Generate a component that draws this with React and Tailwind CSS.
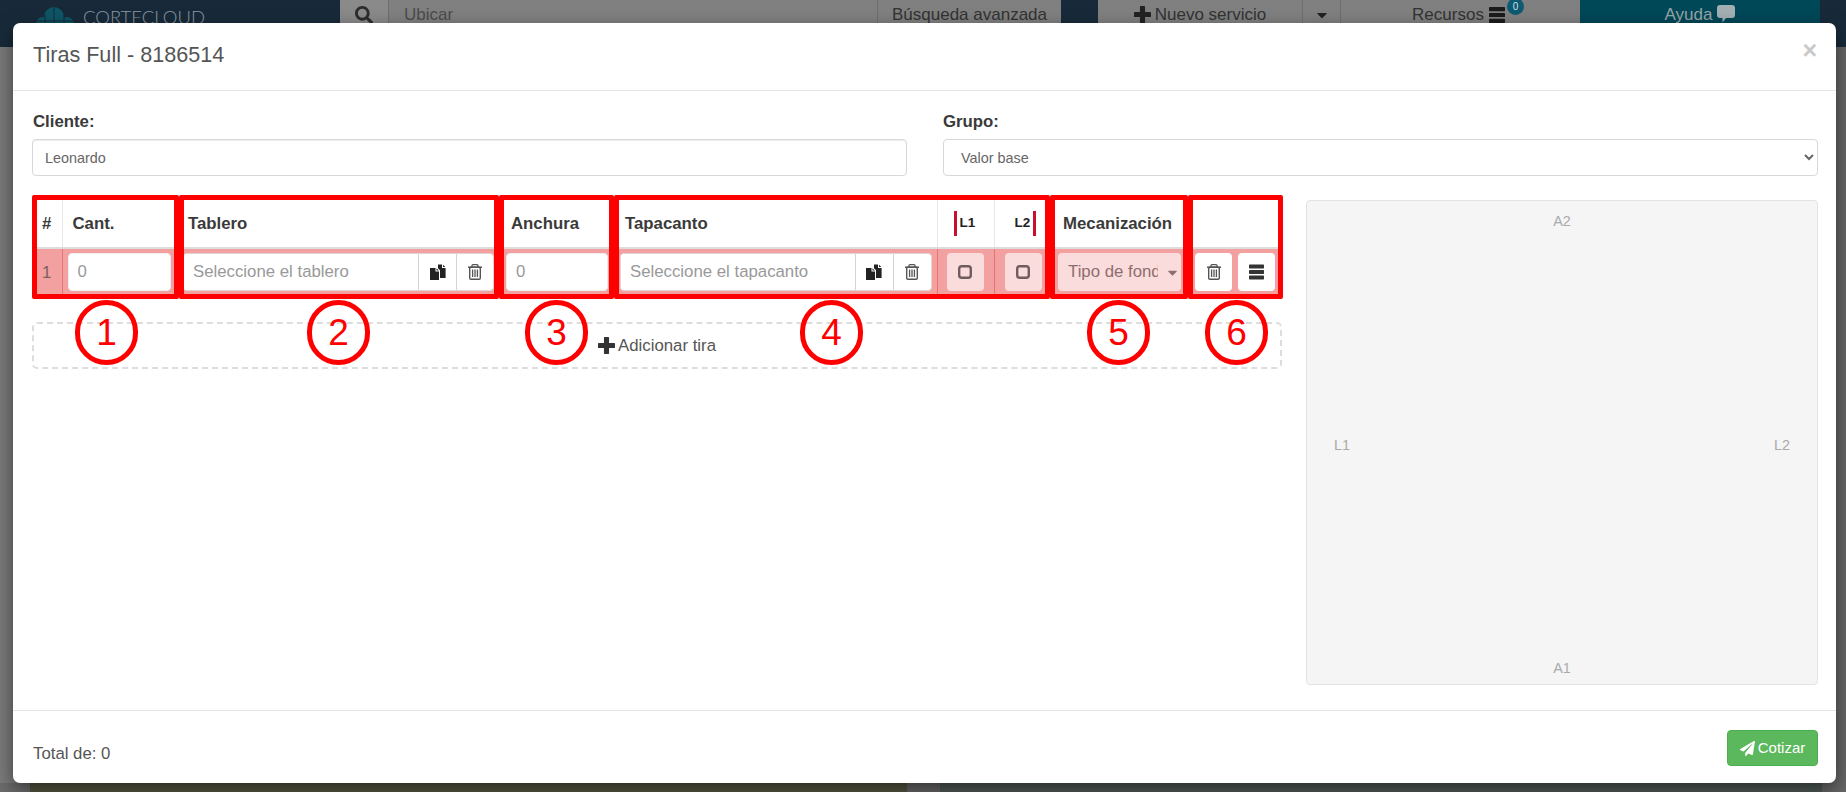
import React from 'react';
import { FaCaretDown, FaPaperPlane, FaSearch } from 'react-icons/fa';

const fieldClass =
  'w-full h-full min-w-0 bg-white px-[9px] text-[16.8px] text-[#555] outline-none placeholder:text-[#999]';

const Bars = ({ className }) => (
  <svg viewBox="0 0 16 16" className={className} fill="currentColor">
    <rect x="0" y="0" width="16" height="4.2" rx="0.7" />
    <rect x="0" y="5.9" width="16" height="4.2" rx="0.7" />
    <rect x="0" y="11.8" width="16" height="4.2" rx="0.7" />
  </svg>
);

const Plus = ({ className }) => (
  <svg viewBox="0 0 16 16" className={className} fill="currentColor">
    <rect x="5.6" y="0" width="4.8" height="16" rx="0.6" />
    <rect x="0" y="5.6" width="16" height="4.8" rx="0.6" />
  </svg>
);

const Trash = ({ className }) => (
  <svg viewBox="0 0 14 16" className={className} fill="none" stroke="currentColor">
    <path d="M0 3.2h14" strokeWidth="1.5" />
    <path d="M4 3V1.6Q4 .7 5 .7h4q1 0 1 .9V3" strokeWidth="1.3" />
    <rect x="1.7" y="3.2" width="10.6" height="12" rx="1.2" strokeWidth="1.4" />
    <path d="M4.6 5.6v7.4M7 5.6v7.4M9.4 5.6v7.4" strokeWidth="1.3" />
  </svg>
);

const Paste = ({ className }) => (
  <svg viewBox="0 0 16 16" className={className} fill="currentColor">
    <path d="M0 4h5.5v3.5H9V16H0z" />
    <path d="M6.5 4.2 8.8 6.5H6.5z" />
    <path d="M8 .5h4v3.4h3.6V14H10V6.2L8 4.2z" />
    <path d="M13 .7 15.3 3H13z" />
  </svg>
);

const Bubble = ({ className }) => (
  <svg viewBox="0 0 18 18" className={className} fill="currentColor">
    <path d="M3 0h12q3 0 3 3v7q0 3-3 3H9l-3.5 4.5V13H3q-3 0-3-3V3q0-3 3-3z" />
  </svg>
);

const Logo = () => (
  <svg viewBox="0 0 40 24" className="w-[40px] h-[24px] mt-[7px]">
    <circle cx="19" cy="10" r="10" fill="#0e5666" />
    <circle cx="8" cy="17" r="7" fill="#0e5666" />
    <circle cx="32" cy="17" r="7" fill="#0e5666" />
    <path d="M0 14h40M19 0v24M10 8v16M29 8v16" stroke="#182a3a" strokeWidth="1" />
  </svg>
);

// input + pegar + borrar, same group for tablero and tapacanto
const PickerGroup = ({ placeholder, pasteClass, deleteClass }) => (
  <div className="flex h-full bg-white rounded-[4px] border border-[#e3d5d5] overflow-hidden">
    <input readOnly placeholder={placeholder} className={`${fieldClass} flex-1`} />
    <span className={`${pasteClass} shrink-0 flex items-center justify-center border-l border-[#d4d4d4] text-[#222]`}>
      <Paste className="w-[16px] h-[16px]" />
    </span>
    <span className={`${deleteClass} shrink-0 flex items-center justify-center border-l border-[#d4d4d4] text-[#555]`}>
      <Trash className="w-[14px] h-[16px]" />
    </span>
  </div>
);

const EdgeButton = () => (
  <span className="w-[37px] h-full flex items-center justify-center rounded-[4px] bg-[#fadcdc] text-[#705c5c]">
    <svg viewBox="0 0 14 14" className="w-[14px] h-[14px]" fill="none" stroke="currentColor" strokeWidth="2.4">
      <rect x="1.2" y="1.2" width="11.6" height="11.6" rx="2.6" />
    </svg>
  </span>
);

const boxes = [
  'left-[19px] w-[147px]',
  'left-[166px] w-[320px]',
  'left-[486px] w-[115px]',
  'left-[601px] w-[436px]',
  'left-[1037px] w-[138px]',
  'left-[1175px] w-[95px]',
];

const circles = [
  { n: 1, cls: 'left-[62px]' },
  { n: 2, cls: 'left-[294px]' },
  { n: 3, cls: 'left-[512px]' },
  { n: 4, cls: 'left-[787px]' },
  { n: 5, cls: 'left-[1074px]' },
  { n: 6, cls: 'left-[1192px]' },
];

const App = () => {
  return (
    <div className="relative w-[1846px] h-[792px] overflow-hidden flex flex-col bg-[#6e6e6e] font-['Liberation_Sans',Arial,sans-serif]">
      {/* Navbar, behind the modal */}
      <nav className="h-[47px] shrink-0 flex bg-[#182a3a] text-[17px] text-[#333] leading-[30px]">
        <div className="w-[340px] pl-[35px] flex gap-[8px]">
          <Logo />
          <span className="font-['Lato',sans-serif] font-light text-[18.5px] leading-[35px] text-[#8c9aa5]">CORTECLOUD</span>
        </div>
        <div className="w-[48px] bg-[#8a8a8a] flex justify-center pt-[6px]">
          <FaSearch className="w-[18px] h-[18px] text-[#2c2c2c]" />
        </div>
        <div className="w-[489px] bg-[#808080] border-l border-[#6f6f6f] pl-[15px] text-[#4c4c4c]">Ubicar</div>
        <div className="w-[184px] bg-[#808080] border-l border-[#6f6f6f] pl-[14px]">Búsqueda avanzada</div>
        <div className="w-[37px]" />
        <div className="w-[204px] bg-[#808080] flex items-start justify-center gap-[4px]">
          <Plus className="w-[17px] h-[17px] mt-[6px] text-[#222]" />
          Nuevo servicio
        </div>
        <div className="w-[38px] bg-[#808080] border-l border-[#6f6f6f] flex justify-center pt-[7px]">
          <FaCaretDown className="w-[16px] h-[16px] text-[#222]" />
        </div>
        <div className="relative w-[240px] bg-[#808080] border-l border-[#6f6f6f] flex justify-center gap-[5px] pr-[4px]">
          Recursos
          <Bars className="w-[16px] h-[16px] mt-[7px] text-[#1c1c1c]" />
          <span className="absolute left-[166px] -top-[2px] w-[17px] h-[17px] rounded-full bg-[#0d5a73] text-[#cfe0e6] text-[10px] leading-[17px] text-center">0</span>
        </div>
        <div className="w-[240px] bg-[#004858] flex justify-center gap-[5px] text-[#9aa5a8]">
          Ayuda
          <Bubble className="w-[18px] h-[18px] mt-[5px] text-[#a3b0b3]" />
        </div>
      </nav>

      <div className="flex-1 bg-gradient-to-r from-[#7a7a7a] via-[#6e6e6e] to-[#666]" />

      {/* Strip under the modal */}
      <div className="h-[9px] shrink-0 flex">
        <div className="w-[30px] bg-[#6b6b6b]" />
        <div className="w-[877px] bg-[#55553f]" />
        <div className="w-[33px] bg-[#666]" />
        <div className="flex-1 bg-[#4f5a55]" />
        <div className="w-[24px] bg-[#666]" />
      </div>

      {/* Modal */}
      <div className="absolute left-[13px] top-[23px] w-[1823px] h-[760px] flex flex-col bg-white rounded-[7px] shadow-[0_6px_18px_rgba(0,0,0,0.5)]">
        <header className="relative h-[68px] shrink-0 border-b border-[#e5e5e5] pl-[20px] pt-[16px]">
          <h4 className="text-[21.6px] leading-[32px] text-[#555]">Tiras Full - 8186514</h4>
          <span className="absolute right-[19px] top-[11px] text-[25px] leading-[32px] font-bold text-[#c9c9c9]">×</span>
        </header>

        <div className="relative flex-1 min-h-0 pl-[19px] pr-[18px] pt-[19px]">
          <div className="grid grid-cols-2 gap-x-[36px] text-[16.8px]">
            <div>
              <label className="block pl-px font-bold text-[#3a3a3a] leading-[24px] mb-[5px]">Cliente:</label>
              <input
                readOnly
                value="Leonardo"
                className="w-full h-[37px] px-[12px] text-[14.4px] text-[#666] bg-white border border-[#d8d8d8] rounded-[4px] shadow-[inset_0_1px_1px_rgba(0,0,0,0.075)] outline-none"
              />
            </div>
            <div>
              <label className="block font-bold text-[#3a3a3a] leading-[24px] mb-[5px]">Grupo:</label>
              <select
                defaultValue="base"
                className="w-full h-[37px] pl-[13px] text-[14.4px] text-[#666] bg-white border border-[#d8d8d8] rounded-[4px] outline-none"
              >
                <option value="base">Valor base</option>
              </select>
            </div>
          </div>

          <div className="flex justify-between mt-[24px] pl-px">
            <div className="w-[1250px]">
              <table className="w-[1250px] table-fixed border-collapse text-[16.8px] text-[#3a3a3a]">
                <colgroup>
                  <col className="w-[29px]" />
                  <col className="w-[117px]" />
                  <col className="w-[320px]" />
                  <col className="w-[114px]" />
                  <col className="w-[324px]" />
                  <col className="w-[57px]" />
                  <col className="w-[55px]" />
                  <col className="w-[138px]" />
                  <col className="w-[96px]" />
                </colgroup>
                <thead>
                  <tr className="h-[48px] border-b-2 border-[#ddd] text-left">
                    <th className="pl-[9px] border-r border-[#e8e8e8]">#</th>
                    <th className="pl-[10px]">Cant.</th>
                    <th className="pl-[9px]">Tablero</th>
                    <th className="pl-[12px]">Anchura</th>
                    <th className="pl-[12px] border-r border-[#e8e8e8]">Tapacanto</th>
                    <th className="pl-[16px] border-r border-[#e8e8e8]">
                      <span className="flex items-center gap-[3px] text-[13.5px] text-[#222]">
                        <span className="w-[3px] h-[25px] bg-[#c8102e]" />
                        L1
                      </span>
                    </th>
                    <th className="pl-[20px]">
                      <span className="flex items-center gap-[3px] text-[13.5px] text-[#222]">
                        L2
                        <span className="w-[3px] h-[25px] bg-[#c8102e]" />
                      </span>
                    </th>
                    <th className="pl-[14px]">Mecanización</th>
                    <th />
                  </tr>
                </thead>
                <tbody>
                  <tr className="h-[49px] bg-[#f2a0a0]">
                    <td className="pl-[9px] border-r border-[#e57373] text-[#7d5f5f]">1</td>
                    <td className="pl-[5px] pr-[8px] pt-[4px] pb-[6px] h-[49px]">
                      <input readOnly placeholder="0" className={`${fieldClass} rounded-[4px] border border-[#eee]`} />
                    </td>
                    <td className="pl-[4px] pr-[5px] pt-[4px] pb-[6px] h-[49px]">
                      <PickerGroup placeholder="Seleccione el tablero" pasteClass="w-[38px]" deleteClass="w-[37px]" />
                    </td>
                    <td className="pl-[7px] pr-[5px] pt-[4px] pb-[6px] h-[49px]">
                      <input readOnly placeholder="0" className={`${fieldClass} rounded-[4px] border border-[#eee]`} />
                    </td>
                    <td className="pl-[7px] pr-[5px] pt-[4px] pb-[6px] h-[49px] border-r border-[#e57373]">
                      <PickerGroup placeholder="Seleccione el tapacanto" pasteClass="w-[38px]" deleteClass="w-[38px]" />
                    </td>
                    <td className="pl-[9px] pt-[4px] pb-[6px] h-[49px] border-r border-[#e57373]">
                      <EdgeButton />
                    </td>
                    <td className="pl-[10px] pt-[4px] pb-[6px] h-[49px]">
                      <EdgeButton />
                    </td>
                    <td className="pl-[9px] pr-[6px] pt-[4px] pb-[6px] h-[49px]">
                      <div className="h-full flex items-center justify-between rounded-[4px] bg-[#fadcdc] pl-[10px] pr-[1px] text-[#8f6d70]">
                        <span className="w-[90px] shrink-0 overflow-hidden whitespace-nowrap">Tipo de fondo</span>
                        <FaCaretDown className="w-[15px] h-[15px] shrink-0 text-[#8f6d70]" />
                      </div>
                    </td>
                    <td className="pl-[8px] pt-[4px] pb-[6px] h-[49px]">
                      <div className="flex h-full gap-[6px]">
                        <span className="w-[37px] flex items-center justify-center rounded-[4px] bg-white text-[#555]">
                          <Trash className="w-[14px] h-[16px]" />
                        </span>
                        <span className="w-[37px] flex items-center justify-center rounded-[4px] bg-white text-[#333]">
                          <Bars className="w-[15px] h-[16px]" />
                        </span>
                      </div>
                    </td>
                  </tr>
                </tbody>
              </table>

              <button className="mt-[25px] w-full h-[47px] -ml-px flex items-center justify-center gap-[3px] border-2 border-dashed border-[#ddd] rounded-[5px] text-[16.8px] text-[#555]">
                <Plus className="w-[17px] h-[17px] text-[#333]" />
                Adicionar tira
              </button>
            </div>

            {/* Preview */}
            <div className="w-[512px] h-[485px] flex flex-col justify-between bg-[#f5f5f5] border border-[#e3e3e3] rounded-[4px] px-[27px] pt-[10px] pb-[4px] text-[14.4px] text-[#aaa]">
              <span className="text-center">A2</span>
              <div className="flex justify-between">
                <span>L1</span>
                <span>L2</span>
              </div>
              <span className="text-center">A1</span>
            </div>
          </div>

          {/* Red annotations drawn over the table */}
          {boxes.map(cls => (
            <div key={cls} className={`absolute top-[104px] h-[104px] border-[5px] border-[#ff0000] rounded-[2px] pointer-events-none ${cls}`} />
          ))}
          {circles.map(({ n, cls }) => (
            <div
              key={n}
              className={`absolute top-[209px] w-[63px] h-[65px] flex items-center justify-center rounded-full border-[5px] border-[#ff0000] text-[37px] text-[#ff0000] ${cls}`}
            >
              {n}
            </div>
          ))}
        </div>

        <footer className="h-[73px] shrink-0 border-t border-[#e5e5e5] flex items-start justify-between pl-[20px] pr-[18px] pt-[19px]">
          <span className="mt-[10px] text-[16.8px] leading-[28px] text-[#555]">Total de: 0</span>
          <button className="w-[91px] h-[36px] flex items-center justify-center gap-[3px] bg-[#5cb85c] border border-[#4cae4c] rounded-[4px] text-[15px] text-white">
            <FaPaperPlane className="w-[15px] h-[15px]" />
            Cotizar
          </button>
        </footer>
      </div>
    </div>
  );
};

export default App;
